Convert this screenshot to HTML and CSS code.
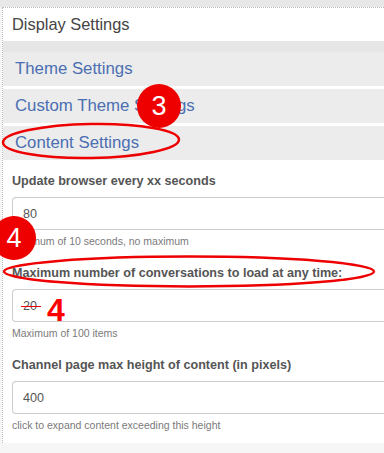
FILE: index.html
```html
<!DOCTYPE html>
<html>
<head>
  <title>Display Settings</title>
  <link rel="stylesheet" href="styles.css">
</head>
<body>
  <div class="topbar"></div>
  <div class="panel">
    <div class="panel-title">Display Settings</div>
    <div class="accordion">
      <div class="acc-row">Theme Settings</div>
      <div class="acc-row">Custom Theme Settings</div>
      <div class="acc-row">Content Settings</div>
    </div>

    <div class="acc-body">
      <div class="form-group">
        <label>Update browser every xx seconds</label>
        <input type="text" class="field" value="80" />
        <div class="help">Minimum of 10 seconds, no maximum</div>
      </div>

      <div class="form-group">
        <label>Maximum number of conversations to load at any time:</label>
        <div class="field">
          <span class="struck">20</span>
          <span class="note">4</span>
        </div>
        <div class="help">Maximum of 100 items</div>
      </div>

      <div class="form-group">
        <label>Channel page max height of content (in pixels)</label>
        <input type="text" class="field" value="400" />
        <div class="help">click to expand content exceeding this height</div>
      </div>
    </div>
  </div>

  <!-- red markup drawn over the screenshot -->
  <svg class="marks" width="384" height="453" viewBox="0 0 384 453">
    <ellipse cx="91" cy="141" rx="88" ry="17" fill="none" stroke="#e00" stroke-width="2.5" transform="rotate(-1 91 141)" />
    <ellipse cx="189" cy="271.5" rx="185" ry="15" fill="none" stroke="#e00" stroke-width="2.5" />
  </svg>
  <div class="badge badge-3">3</div>
  <div class="badge badge-4">4</div>
</body>
</html>
```
FILE: styles.css
```css
body {
  margin: 0;
  width: 384px;
  height: 453px;
  overflow: hidden;
  position: relative;
  background: #f6f6f6;
  font-family: "Liberation Sans", Arial, sans-serif;
}
.topbar {
  height: 7px;
  background: #e8e8e8;
}
.panel {
  margin-left: 2px;
  background: white;
  border-top: 1px dotted #bdbdbd;
  border-left: 1px dotted #bdbdbd;
}
.panel-title {
  height: 33px;
  line-height: 33px;
  padding-left: 9px;
  font-size: 16.4px;
  color: #444;
}
.accordion {
  background: #e6e6e6;
  padding-top: 11px;
}
.acc-row {
  height: 34px;
  line-height: 34px;
  padding-left: 12px;
  font-size: 16.8px;
  color: #4a6fb2;
  background: #ececec;
  border-top: 3px solid white;
}
.acc-row:first-child {
  border-top: none;
}
.acc-body {
  padding: 12px 0 10px 9px;
}
.form-group {
  margin-bottom: 15px;
}
.form-group:last-child {
  margin-bottom: 0;
}
.form-group label {
  display: block;
  font-size: 12.6px;
  font-weight: bold;
  line-height: 18px;
  color: #555;
  margin-bottom: 7px;
}
.field {
  display: flex;
  align-items: center;
  gap: 10px;
  box-sizing: border-box;
  width: 100%;
  height: 33px;
  padding: 0 10px;
  border: 1px solid #ccc;
  border-right: none;
  border-radius: 4px 0 0 4px;
  font-family: inherit;
  font-size: 12.6px;
  color: #555;
  background: white;
  outline: none;
}
.help {
  margin-top: 3px;
  font-size: 10.5px;
  line-height: 16px;
  color: #7a7a7a;
}
.struck {
  position: relative;
}
.struck::after {
  content: "";
  position: absolute;
  left: -2px;
  right: -4px;
  top: 7px;
  height: 1.5px;
  background: #e00;
}
.note {
  font-size: 32px;
  font-weight: bold;
  color: #f00;
  line-height: 1;
  margin-top: 8px;
}
.marks {
  position: absolute;
  left: 0;
  top: 0;
  pointer-events: none;
}
.badge {
  position: absolute;
  width: 44px;
  height: 44px;
  border-radius: 50%;
  background: #ee0000;
  color: white;
  font-size: 27px;
  line-height: 44px;
  text-align: center;
}
.badge-3 {
  left: 137px;
  top: 84px;
}
.badge-4 {
  left: -8px;
  top: 216px;
}
```
